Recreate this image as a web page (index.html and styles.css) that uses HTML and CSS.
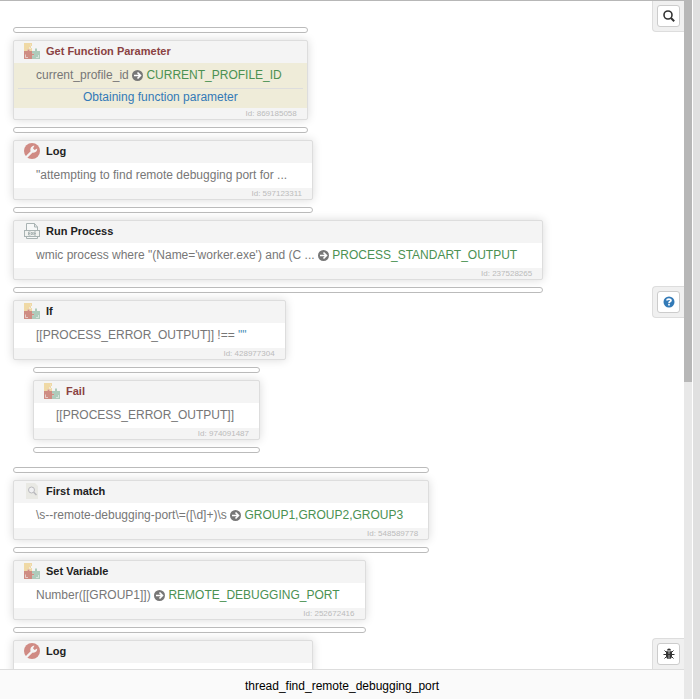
FILE: index.html
```html
<!DOCTYPE html>
<html lang="en">

<head>
    <meta charset="UTF-8">
    <meta name="viewport" content="width=device-width, initial-scale=1.0">
    <title>thread_find_remote_debugging_port</title>
    <link rel="stylesheet" href="styles.css">
</head>

<body>
    <!-- Shared icons -->
    <svg class="sprite" aria-hidden="true">
        <symbol id="icon-puzzle" viewBox="0 0 16 16">
            <path fill="#efd9a6" d="M0 0h8v3H7v2h1v3H5.500V6.500h-2V8H0z" />
            <path fill="#cf8d83" d="M0 8h3.500V6.500h2V8H8v2.500h2v2H8V16H0z" />
            <path fill="#aecbbb" d="M8 8h3V5.500h2V8h3v8H8v-3.500h2v-2H8z" />
            <path fill="none" stroke="#f4f4f4" stroke-opacity=".6" d="M1.500 11.500v3H4M12 14.500h2.500V12M6.500 1.500v1M5.500 4v1.500H7" />
        </symbol>
        <symbol id="icon-wrench" viewBox="0 0 16 16">
            <circle cx="8" cy="8" r="8" fill="#d08b84" />
            <path fill="none" stroke="#f4f4f4" stroke-width="2.400" stroke-linecap="round" d="M3 13.500 8 8.500" />
            <path fill="#f4f4f4" d="M10.500 2.800 9 5.200l1.600 1.700 2.600-1.300c.3 2.600-2 4.700-4.900 4L6.500 8C5.900 5 7.900 2.500 10.500 2.800z" />
        </symbol>
        <symbol id="icon-exe" viewBox="0 0 16 16">
            <path fill="#f7f8f8" stroke="#a9b3b3" d="M2.500 8V.5h8l3 3.500v4M10.500.5V4h3M2.500 13v2.500h11V13" />
            <rect x=".5" y="7.500" width="15" height="6" fill="#f1f2f0" stroke="#a9b3b3" />
            <path fill="none" stroke="#a9b3b3" d="M6.500 9h-2v3h2M4.500 10.500h2M7.200 9l2 3M9.200 9l-2 3M12 9h-2v3h2M10 10.500h2" />
        </symbol>
        <symbol id="icon-match" viewBox="0 0 16 16">
            <path fill="#e9e9e4" d="M2 0h9l3 3v13H2z" />
            <circle cx="7.500" cy="7" r="3" fill="#f0f0f2" stroke="#b9b9bd" />
            <path stroke="#b9b9bd" stroke-width="1.500" d="m9.700 9.200 2.800 2.800" />
        </symbol>
        <symbol id="icon-arrow" viewBox="0 0 10 10">
            <circle cx="5" cy="5" r="5" fill="#777" />
            <path fill="none" stroke="#fff" stroke-width="1.500" d="M1.800 5H7.500M5 2.300 7.700 5 5 7.700" />
        </symbol>
    </svg>

    <div class="window">
        <div class="editor">
            <main class="canvas">
                <div class="step">
                    <div class="drop-line"></div>
                    <section class="block">
                        <h2 class="block-title danger"><svg class="icon"><use href="#icon-puzzle" /></svg>Get Function Parameter</h2>
                        <div class="block-body marked">
                            <p class="block-text">current_profile_id <svg class="arrow"><use href="#icon-arrow" /></svg> <span class="variable">CURRENT_PROFILE_ID</span></p>
                            <p class="comment">Obtaining function parameter</p>
                        </div>
                        <div class="block-id">Id: 869185058</div>
                    </section>
                    <div class="drop-line"></div>
                </div>

                <div class="step">
                    <section class="block">
                        <h2 class="block-title"><svg class="icon"><use href="#icon-wrench" /></svg>Log</h2>
                        <div class="block-body">
                            <p class="block-text">"attempting to find remote debugging port for ...</p>
                        </div>
                        <div class="block-id">Id: 597123311</div>
                    </section>
                    <div class="drop-line"></div>
                </div>

                <div class="step">
                    <section class="block">
                        <h2 class="block-title"><svg class="icon"><use href="#icon-exe" /></svg>Run Process</h2>
                        <div class="block-body">
                            <p class="block-text">wmic process where "(Name='worker.exe') and (C ... <svg class="arrow"><use href="#icon-arrow" /></svg> <span class="variable">PROCESS_STANDART_OUTPUT</span></p>
                        </div>
                        <div class="block-id">Id: 237528265</div>
                    </section>
                    <div class="drop-line"></div>
                </div>

                <div class="step">
                    <section class="block">
                        <h2 class="block-title"><svg class="icon"><use href="#icon-puzzle" /></svg>If</h2>
                        <div class="block-body condition">
                            <p class="block-text">[[PROCESS_ERROR_OUTPUT]] !== <span class="string">""</span></p>
                        </div>
                        <div class="block-id">Id: 428977304</div>
                    </section>
                </div>

                <div class="step nested">
                    <div class="drop-line"></div>
                    <section class="block">
                        <h2 class="block-title danger"><svg class="icon"><use href="#icon-puzzle" /></svg>Fail</h2>
                        <div class="block-body">
                            <p class="block-text">[[PROCESS_ERROR_OUTPUT]]</p>
                        </div>
                        <div class="block-id">Id: 974091487</div>
                    </section>
                    <div class="drop-line"></div>
                </div>

                <div class="step">
                    <div class="drop-line"></div>
                    <section class="block">
                        <h2 class="block-title"><svg class="icon"><use href="#icon-match" /></svg>First match</h2>
                        <div class="block-body">
                            <p class="block-text">\s--remote-debugging-port\=([\d]+)\s <svg class="arrow"><use href="#icon-arrow" /></svg> <span class="variable">GROUP1,GROUP2,GROUP3</span></p>
                        </div>
                        <div class="block-id">Id: 548589778</div>
                    </section>
                    <div class="drop-line"></div>
                </div>

                <div class="step">
                    <section class="block">
                        <h2 class="block-title"><svg class="icon"><use href="#icon-puzzle" /></svg>Set Variable</h2>
                        <div class="block-body">
                            <p class="block-text">Number([[GROUP1]]) <svg class="arrow"><use href="#icon-arrow" /></svg> <span class="variable">REMOTE_DEBUGGING_PORT</span></p>
                        </div>
                        <div class="block-id">Id: 252672416</div>
                    </section>
                    <div class="drop-line"></div>
                </div>

                <div class="step">
                    <section class="block">
                        <h2 class="block-title"><svg class="icon"><use href="#icon-wrench" /></svg>Log</h2>
                        <div class="block-body empty"></div>
                    </section>
                </div>

                <div class="tool tool-top">
                    <button type="button" class="tool-btn" aria-label="Search">
                        <svg width="12" height="12" viewBox="0 0 12 12" fill="none" stroke="#333">
                            <circle cx="5" cy="5" r="4" stroke-width="1.600" />
                            <path stroke-width="2" d="m8 8 3.200 3.200" />
                        </svg>
                    </button>
                </div>
                <div class="tool tool-middle">
                    <button type="button" class="tool-btn" aria-label="Help">
                        <svg width="12" height="12" viewBox="0 0 12 12">
                            <circle cx="6" cy="6" r="5.500" fill="#337ab7" />
                            <path fill="none" stroke="#fff" stroke-width="1.700" d="M4 4.600C4 2.600 8 2.600 8 4.500 8 5.700 6 5.500 6 7.200M6 8v1.600" />
                        </svg>
                    </button>
                </div>
                <div class="tool tool-bottom">
                    <button type="button" class="tool-btn" aria-label="Debug">
                        <svg width="12" height="12" viewBox="0 0 12 12" fill="#333">
                            <path d="M4 2.500a2 2 0 0 1 4 0z" />
                            <path d="M3 3.200h2.700V11C3.800 11 3 9.500 3 8zM6.300 3.200H9V8c0 1.500-.8 3-2.700 3z" />
                            <path fill="none" stroke="#333" d="M1.500 2.500 3.500 4.500M10.500 2.500l-2 2M.5 6.500h11M1.500 10.500l2-2M10.500 10.500l-2-2" />
                        </svg>
                    </button>
                </div>
            </main>

            <footer class="function-name">thread_find_remote_debugging_port</footer>
        </div>

        <div class="scrollbar">
            <div class="scrollbar-thumb"></div>
        </div>
        <div class="edge"></div>
    </div>
</body>

</html>
```

FILE: styles.css
```css
* {
    box-sizing: border-box;
    margin: 0;
    padding: 0;
}

body {
    background-color: #fff;
    font-family: "Liberation Sans", Arial, sans-serif;
    font-size: 12px;
    overflow: hidden;
}

.sprite {
    display: none;
}

.window {
    display: flex;
    height: 100vh;
}

.editor {
    flex: 1;
    min-width: 0;
    display: flex;
    flex-direction: column;
    border-top: 1px solid #b7b7b7;
}

/* Script blocks */
.canvas {
    position: relative;
    flex: 1;
    min-height: 0;
    overflow: hidden;
    padding: 26px 13px 0;
    display: flex;
    flex-direction: column;
    align-items: flex-start;
    gap: 7px;
}

.step {
    flex: none;
    display: flex;
    flex-direction: column;
    gap: 7px;
    white-space: nowrap;
}

.step.nested {
    margin: 0 0 7px 20px;
}

.drop-line {
    height: 6px;
    border: 1px solid #bbb;
    border-radius: 3px;
    background-color: #fff;
}

.block {
    background-color: #f4f4f4;
    border: 1px solid #ddd;
    border-radius: 2px;
    box-shadow: 0 0 10px rgba(0, 0, 0, 0.15);
}

.block-title {
    display: flex;
    align-items: center;
    gap: 6px;
    height: 22px;
    padding: 0 10px 2px;
    font-size: 11px;
    color: #222;
}

.block-title.danger {
    color: #8a4242;
}

.icon {
    width: 16px;
    height: 16px;
}

.block-body {
    background-color: #fff;
    color: #777;
    padding: 0 4px;
}

.block-body.marked {
    background-color: #efecd9;
}

.block-body.condition {
    padding-right: 17px;
}

.block-body.empty {
    width: 298px;
    height: 25px;
}

.block-text {
    padding: 0 21px 0 18px;
    line-height: 25px;
}

.arrow {
    width: 11px;
    height: 11px;
    vertical-align: -2px;
}

.variable {
    color: #4b9152;
}

.string {
    color: #4a90b8;
}

.comment {
    padding-bottom: 2px;
    border-top: 1px solid #ddd;
    line-height: 17px;
    text-align: center;
    color: #337ab7;
}

.block-id {
    padding-right: 10px;
    font-size: 8px;
    line-height: 11px;
    text-align: right;
    color: #bbb;
}

/* Buttons docked to the right side */
.tool {
    position: absolute;
    right: 0;
    padding: 4px;
    background-color: #f0f0f0;
    border: 1px solid #ddd;
    border-right: none;
}

.tool-top {
    top: 0;
    border-top: none;
    border-radius: 0 0 0 4px;
}

.tool-middle {
    top: 285px;
    border-radius: 4px 0 0 4px;
}

.tool-bottom {
    bottom: 0;
    border-bottom: none;
    border-radius: 4px 0 0 0;
}

.tool-btn {
    display: flex;
    align-items: center;
    justify-content: center;
    width: 23px;
    height: 22px;
    background-color: #fff;
    border: 1px solid #ccc;
    border-radius: 3px;
    cursor: pointer;
}

.function-name {
    height: 30px;
    border-top: 1px solid #ddd;
    background-color: #fafafa;
    line-height: 32px;
    text-align: center;
    color: #000;
}

.scrollbar {
    width: 8px;
    margin-right: 1px;
    background-color: #e8e8e8;
}

.scrollbar-thumb {
    height: 382px;
    background-color: #b7b7b7;
}

.edge {
    width: 7px;
    background-color: #e0e0e0;
}
```
